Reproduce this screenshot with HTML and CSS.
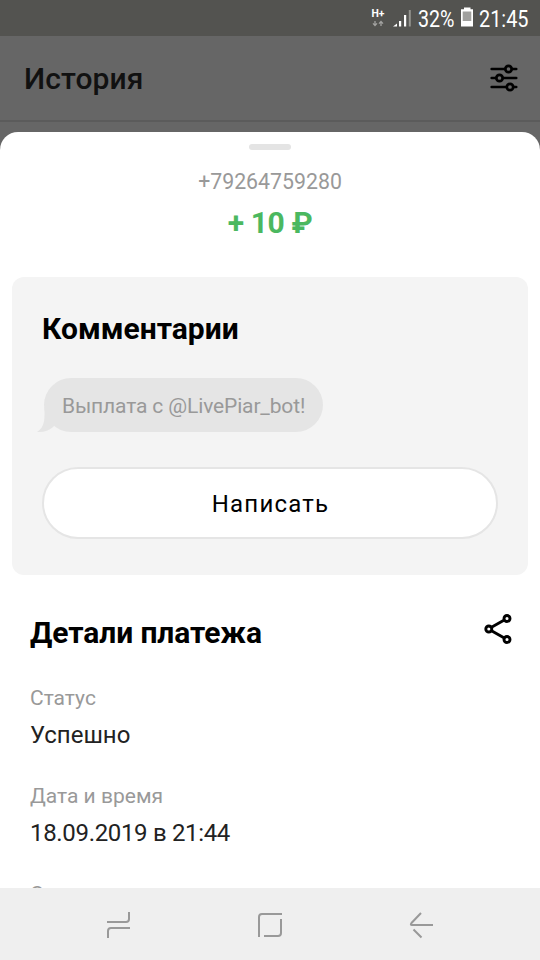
FILE: index.html
```html
<!DOCTYPE html>
<html lang="ru">
<head>
<meta charset="utf-8">
<title>История</title>
<link rel="stylesheet" href="styles.css">
</head>
<body>
<div class="screen">
  <div class="status-bar">
    <svg width="180" height="36" viewBox="360 0 180 36">
      <text class="net" x="371.5" y="17" textLength="13" lengthAdjust="spacingAndGlyphs">H+</text>
      <path d="M375 21v4.500M373 23.400l2 2.200 2-2.200M381 26v-4.500M379 23.600l2-2.200 2 2.200" fill="none" stroke="#a3a3a1" stroke-width="1.300"/>
      <path d="M393 26.500l4-3v3zM399 21h2.200v5.500H399zM404 15h2.200v11.500H404z" fill="#fff"/>
      <path d="M408.800 10h2v16.500h-2z" fill="#94948f"/>
      <text class="stat" x="418" y="26.800" textLength="36.500" lengthAdjust="spacingAndGlyphs">32%</text>
      <path d="M464 7.500h6.500v1.800H473V26.500H461V9.300h3z" fill="#fff"/>
      <path d="M462.700 11.500h8.600v9.500h-8.600z" fill="#a0a09e"/>
      <text class="stat" x="479" y="26.800" textLength="49.500" lengthAdjust="spacingAndGlyphs">21:45</text>
    </svg>
  </div>
  <header class="header">
    <h1 class="header-title">История</h1>
    <svg class="filter" width="28" height="28" viewBox="490 64 28 28" fill="none" stroke="#000" stroke-width="2.700" stroke-linecap="round">
      <path d="M491.700 69h13.300M512 69h4.200M491.700 78h4.300M503 78h13.200M491.700 87h14.800M513.500 87h2.700"/>
      <circle cx="508.500" cy="69" r="3.200"/><circle cx="499.500" cy="78" r="3.200"/><circle cx="510" cy="87" r="3.200"/>
    </svg>
  </header>
  <main class="sheet">
    <div class="handle"></div>
    <div class="phone">+79264759280</div>
    <div class="amount">+ 10 ₽</div>
    <section class="comments">
      <h2 class="title">Комментарии</h2>
      <div class="bubble">Выплата с @LivePiar_bot!
        <svg class="tail" width="24" height="26" viewBox="0 0 24 26"><path d="M7.500 0V8C7.500 17 5 22 0 24.800C6 25.600 12 23.500 15.500 20.500L24 12V0z" fill="#e5e5e5"/></svg>
      </div>
      <button class="write">Написать</button>
    </section>
    <section class="details">
      <div class="details-head">
        <h2 class="title title-tight">Детали платежа</h2>
        <svg width="30" height="32" viewBox="483 613 30 32" fill="none" stroke="#000" stroke-width="2.900">
          <path d="M491.500 627.300L504.300 620M491.500 630.700L504.300 638"/>
          <circle cx="488.800" cy="629" r="3"/><circle cx="507" cy="618.500" r="3"/><circle cx="507" cy="639.500" r="3"/>
        </svg>
      </div>
      <dl class="fields">
        <div class="field"><dt>Статус</dt><dd>Успешно</dd></div>
        <div class="field"><dt>Дата и время</dt><dd class="date">18.09.2019 в 21:44</dd></div>
        <div class="field"><dt>С</dt></div>
      </dl>
    </section>
  </main>
  <nav class="nav">
    <svg width="540" height="72" viewBox="0 888 540 72" fill="none" stroke="#999" stroke-width="2">
      <path d="M107 922h19q3 0 3-3v-7M108 938v-7q0-3 3-3h19"/>
      <path d="M259 937v-20q0-3 3-3h20M281 919v14q0 3-3 3h-14"/>
      <path d="M433 925h-21q-2 0-.500-2L421 913M413.500 929.500l8 8"/>
    </svg>
  </nav>
</div>
</body>
</html>
```
FILE: styles.css
```css
* { box-sizing: border-box; margin: 0; padding: 0; }
body { background: #666; font-family: Roboto, "Liberation Sans", sans-serif; }
.screen { width: 540px; height: 960px; display: flex; flex-direction: column; overflow: hidden; background: #666; }
.status-bar { height: 36px; flex: none; display: flex; justify-content: flex-end; background: #535350; }
.net { font-size: 10.5px; font-weight: 700; fill: #fff; }
.stat { font-size: 23.5px; fill: #fff; }
.header { height: 86px; flex: none; display: flex; align-items: center; justify-content: space-between; padding: 1px 22px 0 24px; border-bottom: 2px solid #5b5b5b; margin-bottom: 10px; }
.header-title { font-size: 30px; font-weight: 500; line-height: 36px; letter-spacing: 0.1px; color: #111; }
.filter { margin-top: -2px; }
.sheet { flex: 1; min-height: 0; overflow: hidden; display: flex; flex-direction: column; background: #fff; border-radius: 18px 18px 0 0; padding-top: 12px; }
.handle { flex: none; width: 42px; height: 6px; border-radius: 3px; background: #e4e4e4; margin: 0 auto 18px; }
.phone { flex: none; font-size: 21.3px; line-height: 28px; color: #999; text-align: center; }
.amount { flex: none; font-size: 30px; font-weight: 700; line-height: 36px; letter-spacing: -0.4px; color: #4bb860; text-align: center; margin: 9px 0 36px; }
.comments { flex: none; height: 298px; margin: 0 12px; padding: 34px 30px 36px; background: #f4f4f4; border-radius: 12px; display: flex; flex-direction: column; align-items: flex-start; }
.title { font-size: 30px; font-weight: 700; line-height: 36px; color: #000; }
.title-tight { letter-spacing: -0.08px; }
.bubble { position: relative; width: 279px; height: 54px; margin: 31px 0 0 2px; padding-left: 18px; border-radius: 27px; background: #e5e5e5; color: #999; font-size: 21px; line-height: 56px; letter-spacing: -0.14px; white-space: nowrap; }
.tail { position: absolute; left: -7.5px; bottom: -1px; }
.write { width: 456px; height: 72px; margin-top: 35px; padding: 2px 0 0 1px; border: 2px solid #e5e5e5; border-radius: 36px; background: #fff; color: #000; font: 400 24px Roboto, sans-serif; letter-spacing: 1.2px; }
.details { padding: 38px 27px 0 30px; flex: none; }
.details-head { display: flex; justify-content: space-between; align-items: flex-start; height: 40px; margin-top: 2px; }
.details-head svg { margin-top: -2px; }
.fields { display: flex; flex-direction: column; margin-top: 29px; }
.field { height: 98px; }
.field dt { font-size: 21px; line-height: 28px; color: #999; }
.field dd { margin-top: 8px; font-size: 24px; line-height: 30px; color: #222; }
.field .date { letter-spacing: -0.33px; }
.nav { height: 72px; flex: none; background: #efefef; }
.nav svg { display: block; }
```
